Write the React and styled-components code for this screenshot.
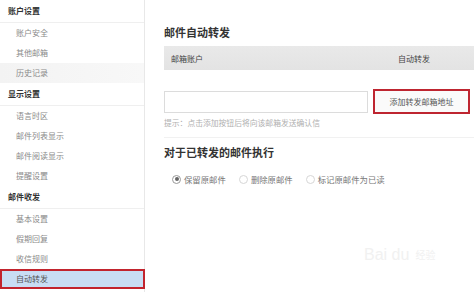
import styled, { createGlobalStyle } from "styled-components";

const GlobalStyle = createGlobalStyle`
  html, body {
    margin: 0;
    padding: 0;
    background: #ffffff;
  }
  body {
    font-family: "Noto Sans CJK SC", "Noto Sans", sans-serif;
  }
`;

const Page = styled.div`
  position: relative;
  display: flex;
  width: 474px;
  height: 292px;
  overflow: hidden;
  background: #fff;
`;

const Sidebar = styled.div`
  width: 144px;
  flex-shrink: 0;
  border-right: 1px solid #e8e8e8;
  display: flex;
  flex-direction: column;
`;

const SectionTitle = styled.div`
  height: 22px;
  line-height: 22px;
  padding-left: 8px;
  font-size: 8px;
  font-weight: 700;
  color: #333;
  border-bottom: 1px solid #efefef;
`;

const MenuItem = styled.div`
  height: 20px;
  line-height: 20px;
  padding-left: 16px;
  font-size: 8px;
  color: ${p => (p.active ? "#555" : "#8a8a8a")};
  background: ${p => (p.active ? "#c8ddf4" : p.hover ? "linear-gradient(to right, #f3f3f3, #f8f8f8)" : "transparent")};
  box-shadow: ${p => (p.active ? "inset 0 0 0 2px #c2242e" : "none")};
  width: ${p => (p.active ? "145px" : "auto")};
  box-sizing: border-box;
`;

const Main = styled.div`
  flex: 1;
  padding: 24px 0 0 19px;
  display: flex;
  flex-direction: column;
`;

const Heading = styled.div`
  font-size: 11px;
  line-height: 16px;
  font-weight: 700;
  color: #333;
  margin-top: ${p => p.gap || 0}px;
`;

const TableHead = styled.div`
  margin-top: 6px;
  height: 24px;
  display: grid;
  grid-template-columns: 234px 1fr;
  align-items: center;
  background: linear-gradient(to bottom, #e9e9e9, #e3e3e3);
  font-size: 8px;
  color: #444;
`;

const HeadCell = styled.div`
  padding-left: ${p => p.pad || 0}px;
`;

const FormRow = styled.div`
  margin-top: 19px;
  display: flex;
  align-items: center;
  gap: 5px;
`;

const Input = styled.div`
  width: 202px;
  height: 20px;
  border: 1px solid #dcdcdc;
  background: #fff;
`;

const AddButton = styled.div`
  width: 97px;
  height: 25px;
  box-sizing: border-box;
  border: 2px solid #be2530;
  background: #fafafa;
  display: flex;
  align-items: center;
  justify-content: center;
  font-size: 8px;
  color: #555;
`;

const Hint = styled.div`
  margin-top: 3px;
  font-size: 7.8px;
  line-height: 12px;
  color: #b0b0b0;
`;

const Divider = styled.div`
  margin-top: 8px;
  border-top: 1px solid #f1f1f1;
`;

const RadioRow = styled.div`
  margin-top: 13px;
  padding-left: 8px;
  display: flex;
  align-items: center;
  gap: 13px;
  font-size: 8.4px;
  line-height: 12px;
  color: #777;
`;

const RadioOption = styled.label`
  display: flex;
  align-items: center;
  gap: 3px;
`;

const RadioDot = styled.span`
  width: 7px;
  height: 7px;
  border-radius: 50%;
  border: 1px solid ${p => (p.checked ? "#999" : "#d6d6d6")};
  background: #fff;
  display: flex;
  align-items: center;
  justify-content: center;
  &::after {
    content: "";
    width: 4px;
    height: 4px;
    border-radius: 50%;
    background: ${p => (p.checked ? "#666" : "transparent")};
  }
`;

const Watermark = styled.div`
  position: absolute;
  left: 364px;
  top: 246px;
  display: flex;
  align-items: flex-end;
  gap: 6px;
  color: #f1f1f1;
  font-family: "Liberation Sans", sans-serif;
  font-size: 16px;
  font-weight: 400;
  pointer-events: none;
`;

const WatermarkSub = styled.span`
  font-family: "Noto Sans CJK SC", sans-serif;
  font-size: 10px;
  margin-bottom: 2px;
`;

const menu = [
  { title: "账户设置", items: ["账户安全", "其他邮箱", "历史记录"] },
  { title: "显示设置", items: ["语言时区", "邮件列表显示", "邮件阅读显示", "提醒设置"] },
  { title: "邮件收发", items: ["基本设置", "假期回复", "收信规则", "自动转发"] },
];

const options = [
  { label: "保留原邮件", checked: true },
  { label: "删除原邮件" },
  { label: "标记原邮件为已读" },
];

export default function App() {
  return (
    <Page>
      <GlobalStyle />
      <Sidebar>
        {menu.map(group => (
          <div key={group.title}>
            <SectionTitle>{group.title}</SectionTitle>
            {group.items.map(item => (
              <MenuItem
                key={item}
                active={item === "自动转发"}
                hover={item === "历史记录"}
              >
                {item}
              </MenuItem>
            ))}
          </div>
        ))}
      </Sidebar>
      <Main>
        <Heading>邮件自动转发</Heading>
        <TableHead>
          <HeadCell pad={7}>邮箱账户</HeadCell>
          <HeadCell>自动转发</HeadCell>
        </TableHead>
        <FormRow>
          <Input />
          <AddButton>添加转发邮箱地址</AddButton>
        </FormRow>
        <Hint>提示：点击添加按钮后将向该邮箱发送确认信</Hint>
        <Divider />
        <Heading gap={6}>对于已转发的邮件执行</Heading>
        <RadioRow>
          {options.map(o => (
            <RadioOption key={o.label}>
              <RadioDot checked={o.checked} />
              {o.label}
            </RadioOption>
          ))}
        </RadioRow>
      </Main>
      <Watermark>
        Bai du<WatermarkSub>经验</WatermarkSub>
      </Watermark>
    </Page>
  );
}
